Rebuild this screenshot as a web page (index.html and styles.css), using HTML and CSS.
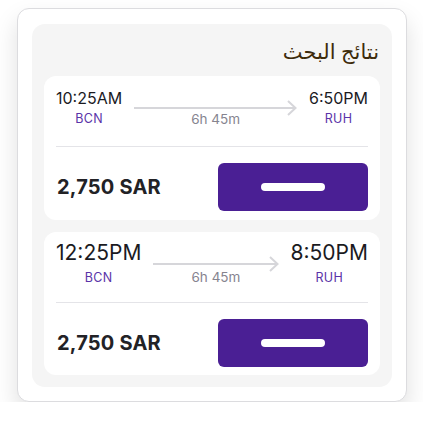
FILE: index.html
```html
<!DOCTYPE html>
<html lang="ar">
<head>
<meta charset="utf-8">
<link rel="stylesheet" href="styles.css">
</head>
<body>
<div class="shell">
  <div class="panel">
    <h1 class="title" dir="rtl">نتائج البحث</h1>

    <div class="card">
      <div class="route">
        <div class="stop">
          <div class="time">10:25AM</div>
          <div class="code">BCN</div>
        </div>
        <div class="mid">
          <svg class="arrow" viewBox="0 0 100 16" preserveAspectRatio="none" width="100%" height="16">
            <line x1="0" y1="8" x2="99" y2="8" stroke="#d6d6da" stroke-width="2" vector-effect="non-scaling-stroke"/>
          </svg>
          <svg class="head" viewBox="0 0 10 16" width="10" height="16"><path d="M1 1 L8.5 8 L1 15" fill="none" stroke="#d6d6da" stroke-width="2"/></svg>
          <div class="dur">6h 45m</div>
        </div>
        <div class="stop">
          <div class="time">6:50PM</div>
          <div class="code">RUH</div>
        </div>
      </div>
      <div class="foot">
        <div class="price">2,750 SAR</div>
        <button class="btn"><span class="bar"></span></button>
      </div>
    </div>

    <div class="card card-lg">
      <div class="route">
        <div class="stop">
          <div class="time">12:25PM</div>
          <div class="code">BCN</div>
        </div>
        <div class="mid">
          <svg class="arrow" viewBox="0 0 100 16" preserveAspectRatio="none" width="100%" height="16">
            <line x1="0" y1="8" x2="99" y2="8" stroke="#d6d6da" stroke-width="2" vector-effect="non-scaling-stroke"/>
          </svg>
          <svg class="head" viewBox="0 0 10 16" width="10" height="16"><path d="M1 1 L8.5 8 L1 15" fill="none" stroke="#d6d6da" stroke-width="2"/></svg>
          <div class="dur">6h 45m</div>
        </div>
        <div class="stop">
          <div class="time">8:50PM</div>
          <div class="code">RUH</div>
        </div>
      </div>
      <div class="foot">
        <div class="price">2,750 SAR</div>
        <button class="btn"><span class="bar"></span></button>
      </div>
    </div>
  </div>
</div>
</body>
</html>
```

FILE: styles.css
```css
* { box-sizing: border-box; }

html, body {
  margin: 0;
  padding: 0;
  background: #ffffff;
}

body {
  padding-top: 8px;
  font-family: Inter, "Noto Sans", sans-serif;
  color: #1b1b1f;
}

.shell {
  width: 390px;
  margin: 0 auto 0 17px;
  background: #ffffff;
  border: 1px solid #dcdcdf;
  border-radius: 12px;
  padding: 15px 14px 14px;
  box-shadow: 0 12px 24px rgba(0, 0, 0, 0.13);
}

.panel {
  background: #f5f5f5;
  border-radius: 13px;
  padding: 12px;
  display: flex;
  flex-direction: column;
  gap: 12px;
}

.title {
  margin: 0 0 -2px;
  font-family: "Noto Sans", "DejaVu Sans", sans-serif;
  font-weight: 400;
  font-size: 21px;
  line-height: 30px;
  color: #3d2b0b;
  text-align: right;
  padding-right: 1px;
}

.card {
  background: #ffffff;
  border-radius: 12px;
  padding: 12px 12px 9px;
}

.route {
  display: flex;
  align-items: flex-start;
  gap: 12px;
  padding-bottom: 19px;
  border-bottom: 1px solid #e4e4e8;
}

.stop {
  display: flex;
  flex-direction: column;
  align-items: center;
}

.time {
  font-size: 16px;
  line-height: 20px;
  color: #1b1b1f;
}

.code {
  margin-top: 3px;
  font-size: 12.5px;
  line-height: 16px;
  font-weight: 400;
  letter-spacing: 0.3px;
  color: #5a33a8;
}

.mid {
  flex: 1;
  position: relative;
  display: flex;
  flex-direction: column;
  align-items: center;
  padding-top: 12px;
}

.arrow {
  display: block;
  width: 100%;
  height: 16px;
}

.head {
  position: absolute;
  right: 0;
  top: 12px;
}

.dur {
  margin-top: -5px;
  font-size: 13.5px;
  line-height: 16px;
  color: #86848f;
}

.foot {
  display: flex;
  align-items: center;
  justify-content: space-between;
  padding-top: 16px;
}

.price {
  padding-left: 1px;
  font-size: 20px;
  font-weight: 700;
  letter-spacing: 0.2px;
  color: #222226;
}

.btn {
  width: 150px;
  height: 48px;
  border: 0;
  border-radius: 6px;
  background: #4a1f94;
  display: flex;
  align-items: center;
  justify-content: center;
  padding: 0;
}

.bar {
  display: block;
  width: 64px;
  height: 8px;
  border-radius: 4px;
  background: #ffffff;
}

/* second, larger result */
.card-lg {
  padding-top: 9px;
  padding-bottom: 8px;
}

.card-lg .route {
  padding-bottom: 16px;
}

.card-lg .time {
  font-size: 21px;
  line-height: 24px;
}

.card-lg .code {
  margin-top: 5px;
}

.card-lg .mid {
  padding-top: 15px;
}

.card-lg .head {
  top: 15px;
}

.card-lg .dur {
  margin-top: -3px;
}
```
